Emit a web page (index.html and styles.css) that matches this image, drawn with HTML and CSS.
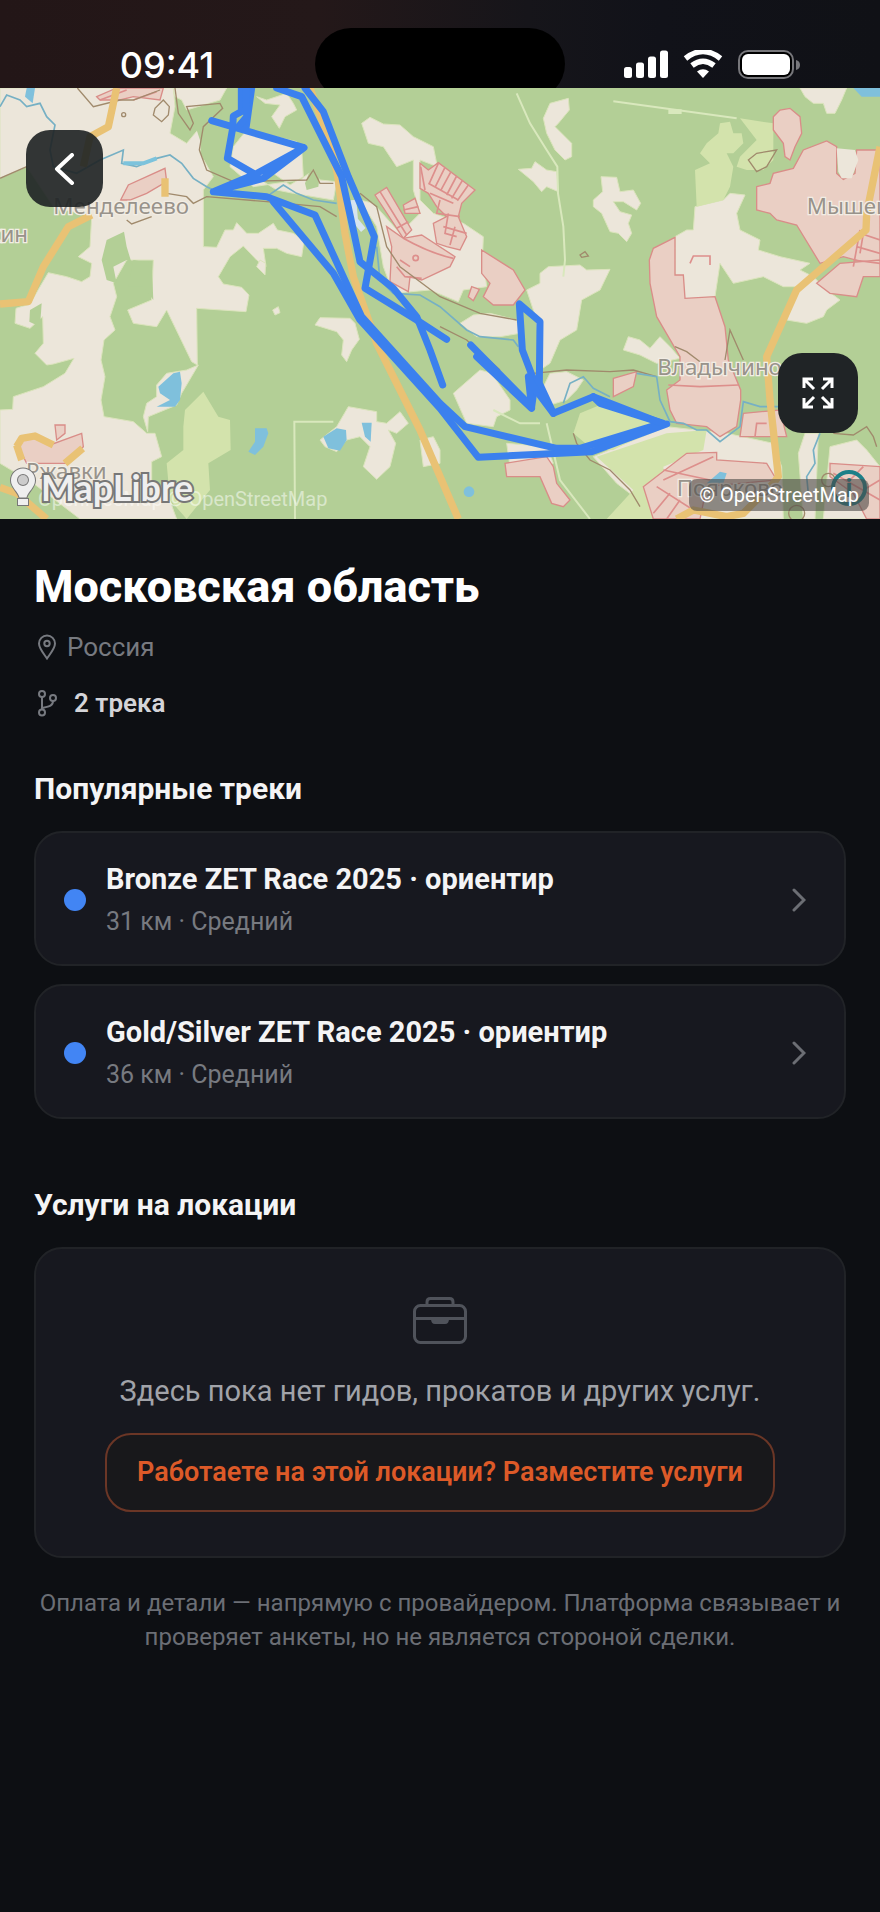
FILE: index.html
```html
<!DOCTYPE html>
<html lang="ru">
<head>
    <meta charset="utf-8">
    <meta name="viewport" content="width=device-width, initial-scale=1.0, viewport-fit=cover">
    <meta name="theme-color" content="#0d0f13">
    <title>Московская область</title>
    <link rel="stylesheet" href="styles.css">
</head>

<body>
    <header class="status">
        <span class="time">09:41</span>
        <div class="island"></div>
        <div class="status-icons">
            <svg width="44" height="28" viewBox="0 0 44 28" fill="#fff">
                <rect x="0" y="17" width="8" height="11" rx="2.5"/>
                <rect x="12" y="12.500" width="8" height="15.500" rx="2.500"/>
                <rect x="24" y="6.500" width="8" height="21.500" rx="2.500"/>
                <rect x="36" y="0.500" width="8" height="27.500" rx="2.500"/>
            </svg>
            <svg width="40" height="28" viewBox="0 0 40 28" fill="none" stroke="#fff">
                <path d="M2.500 8.500Q20-5.500 37.500 8.500" stroke-width="5.500"/>
                <path d="M9 15.500Q20 7 31 15.500" stroke-width="5.500"/>
                <path d="M14 21.500Q20 17 26 21.500L20 28z" fill="#fff" stroke="none"/>
            </svg>
            <svg width="62" height="29" viewBox="0 0 62 29">
                <rect x="1" y="1" width="54" height="27" rx="9" fill="#000" stroke="#77777b" stroke-width="2"/>
                <rect x="4" y="4" width="48" height="21" rx="6" fill="#fff"/>
                <path d="M58 10q4 1 4 5t-4 5z" fill="#77777b"/>
            </svg>
        </div>
    </header>

    <section class="map">
        <svg class="tiles" viewBox="0 264 2640 1293" preserveAspectRatio="xMidYMid slice">
            <rect y="264" width="2640" height="1293" fill="#b3cf96"/>

            <!-- fields -->
            <g fill="#ece6da" stroke="#dce4bd" stroke-width="3">
                <path d="M0 264H520L525 320 510 400 560 430 585 400 610 370 600 460 640 530 610 570V740L650 742 675 690 700 690 710 668 740 700 775 700 820 670 832 690 880 700 912 722 905 770 860 760 830 745 790 745 798 800 770 780 730 738 690 770 655 830 670 852 725 862 747 885 738 935 590 925 592 1095 575 1085 500 930 470 980 400 970 383 930 455 900 460 780 380 780 340 850 350 890 330 950 345 990 312 1020 303 1080 315 1130 303 1200 312 1250 400 1265 440 1300 465 1300 485 1370 455 1385 455 1440 500 1470 520 1530 530 1557H240L100 1450 0 1390V1230L38 1228 40 1190 130 1160 195 1120 222 1075 160 1092 140 1095 105 1060 130 1030 128 950 90 985 45 970 48 925 90 912 120 860 145 818 200 830 245 845 270 830 275 790 235 770 270 740 275 650 160 620 80 500 0 535Z"/>
                <path d="M520 264H680L660 300 560 330 545 300 525 290Z"/>
                <path d="M770 290L800 300 860 280 880 310 890 330 855 350 838 385 815 350 840 315 795 310Z"/>
                <path d="M1085 370L1110 352 1150 372 1200 375 1240 410 1300 440 1312 500 1260 480 1260 600 1300 640 1390 670 1450 710 1448 760 1460 860 1390 870 1375 905 1290 870 1180 880 1150 800 1130 680 1080 600 1120 610 1200 700 1260 640 1240 570 1240 480 1190 500 1150 440 1105 430Z"/>
                <path d="M740 390L890 425 905 445 910 530 870 555 820 520 790 545 830 570 880 580 1000 600 1010 545 960 540 940 510 900 540 760 560 690 500 700 440Z"/>
                <path d="M1630 355L1650 310 1705 295 1708 330 1675 370 1665 380 1715 430 1715 470 1695 480 1665 450 1640 400Z"/>
                <path d="M1555 508L1595 505 1605 485 1640 510 1670 515 1675 575 1640 560 1625 575 1600 545Z"/>
                <path d="M1803 530L1850 532 1860 575 1900 570 1922 610 1910 630 1870 605 1840 605 1860 635 1895 645 1885 670 1895 700 1880 725 1855 700 1830 695 1805 640 1780 620 1780 600 1808 575Z"/>
                <path d="M2085 620L2170 600 2190 580 2235 585 2210 640 2220 690 2280 720 2275 750 2340 770 2430 790 2400 810 2440 830 2480 870 2520 900 2480 930 2470 950 2420 970 2360 960 2400 860 2350 860 2290 830 2200 850 2160 790 2145 890 2050 900 2025 820 2025 710 2060 690 2080 690Z"/>
                <path d="M2400 264H2540L2525 300 2505 340 2480 340 2470 310 2440 310 2415 290Z"/>
                <path d="M945 975L960 953 1050 955 1065 970 1078 1018 1055 1050 1040 1085 1025 1065 1030 1020 1010 995Z"/>
                <path d="M960 1320L1010 1280 1045 1220 1130 1235 1130 1265 1160 1270 1200 1235 1225 1270 1190 1300 1165 1290 1187 1330 1170 1400 1130 1438 1090 1400 1110 1340 1080 1310 1040 1320 1010 1355 975 1340Z"/>
                <path d="M1380 970L1420 945 1470 940 1550 960 1560 1000 1500 1010 1430 1010Z"/>
                <path d="M1360 1180L1440 1110 1475 1120 1530 1200 1530 1230 1490 1250 1480 1280 1400 1270Z"/>
                <path d="M1620 820L1645 800 1740 795 1760 810 1830 808 1800 870 1745 900 1730 990 1680 1020 1650 1090 1620 1110 1610 960 1580 870 1620 850Z"/>
                <path d="M1870 1050L1885 1010 1920 1020 1950 1045 1980 1010 2010 1040 2040 1075 1970 1090 1920 1065Z"/>
                <path d="M1650 1120L1700 1115 1750 1140 1730 1170 1700 1200 1650 1215 1625 1170Z"/>
                <path d="M2000 1280L2180 1300 2320 1330 2345 1400 2350 1557H1990L1850 1450 1780 1370Z"/>
                <path d="M2415 1300L2455 1300 2445 1557H2410L2395 1360Z"/>
                <path d="M2490 1340L2570 1320 2600 1350 2640 1400V1557H2470Z"/>
                <path d="M780 780L770 800 795 825 797 790Z"/>
                <path d="M818 930L835 920 840 938 825 945Z"/>
                <path d="M1520 1330L1640 1340 1660 1390 1600 1410 1530 1400Z"/>
                <path d="M1260 1320L1300 1310 1320 1350V1390L1270 1400Z"/>
                <path d="M430 1250L440 1210 470 1190 470 1155 500 1120 560 1110 595 1095 545 1180 530 1215 445 1250 443 1295Z"/>
            </g>

            <!-- clearings -->
            <g fill="#d3e3ac">
                <path d="M2090 620L2085 510 2130 490 2100 460 2120 430 2155 400 2160 370 2190 365 2200 400 2225 400 2230 430 2200 460 2180 460 2200 500 2190 560 2170 600Z"/>
                <path d="M2220 355L2320 370 2320 480 2290 510 2240 510 2210 500 2220 470 2270 420Z"/>
                <path d="M555 1230L610 1175 655 1250 690 1260 692 1350 625 1390 630 1470 560 1557 510 1500 500 1390 550 1350 550 1280Z"/>
                <path d="M1740 1240L1800 1215 1920 1240 1990 1270 1840 1350 1780 1350 1720 1300Z"/>
                <path d="M1790 1370L2000 1300 2120 1290 2110 1350 1990 1400 2000 1557H1820L1900 1470Z"/>
            </g>

            <!-- groves inside the fields -->
            <g fill="#b3cf96">
                <path d="M320 720L372 695 380 740 395 790 380 780 340 800 350 850 320 840 305 780Z"/>
                <path d="M400 780L455 790 460 900 430 860 385 860Z"/>
                <path d="M90 930L125 910 120 980 88 965Z"/>
                <path d="M580 360L660 320 680 420 610 480 600 420Z"/>
                <path d="M915 550L930 510 960 520 955 560 920 570Z"/>
            </g>

            <!-- settlements -->
            <g fill="#eacfc4" stroke="#d98d88" stroke-width="4">
                <path d="M290 290L350 264H490L480 300 400 290 360 300 300 300Z"/>
                <path d="M362 600L385 555 495 505 500 545 440 580 390 600Z"/>
                <path d="M1125 585L1160 562 1235 690 1210 715Z"/>
                <path d="M1160 680L1210 715 1265 705 1365 770 1350 800 1265 840 1230 830 1225 875 1170 845 1175 740Z"/>
                <path d="M1260 490L1285 510 1315 488 1425 570 1385 610 1375 650 1400 710 1380 750 1340 740 1310 730 1300 670 1340 650 1310 620 1285 580 1260 565Z"/>
                <path d="M1210 615L1245 595 1260 640 1215 640Z"/>
                <path d="M1445 750L1540 810 1575 870 1540 915 1480 915 1450 890 1470 850 1445 820Z"/>
                <path d="M1415 860L1438 868 1420 902 1405 890Z"/>
                <path d="M1948 780L1960 745 2025 712V825L2050 825 2055 895 2145 890 2175 980 2185 1080 2222 1170 2222 1200 2210 1280 2160 1310 2120 1280 2030 1270 2010 1230 2000 1170 2040 1140V1070L1970 950 1950 850Z"/>
                <path d="M2320 350L2340 330 2370 325 2400 350 2405 400 2385 440 2370 480 2355 470 2350 430 2320 390Z"/>
                <path d="M2270 560L2310 550 2320 520 2380 505 2410 450 2480 423 2510 440V520L2530 538 2565 520 2570 450H2640V800L2530 770 2460 790 2390 675 2330 660 2310 640 2270 630Z"/>
                <path d="M2230 1240L2340 1230 2360 1310 2220 1310Z"/>
                <path d="M1515 1390L1640 1370 1660 1400 1670 1450 1710 1500 1690 1520 1655 1510 1620 1430 1520 1430Z"/>
                <path d="M1840 1135L1910 1115 1900 1160 1840 1190Z"/>
                <path d="M1930 1460L2060 1360 2150 1357 2150 1380 2300 1390 2330 1440 2220 1450 2120 1460 2100 1557H1960Z"/>
                <path d="M2490 1390L2640 1400V1557H2600L2560 1480 2490 1430Z"/>
                <path d="M2450 850L2520 790 2640 780V830L2590 830 2570 890 2490 880Z"/>
                <path d="M50 1330L90 1310 150 1335 245 1300 250 1340 200 1390 80 1390Z"/>
                <path d="M165 1275L195 1275 195 1300 170 1320Z"/>
            </g>
            <path d="M2510 445L2565 450 2575 480 2555 535 2525 535 2515 515Z" fill="#ece6da"/>
            <g fill="none" stroke="#dd8f8c" stroke-width="5">
                <path d="M1140 575L1220 705M1190 685L1225 665M1210 715Q1290 760 1360 775M1315 490L1288 550M1335 502L1305 562M1353 515L1322 572M1370 528L1340 585M1388 540L1355 595M1405 555L1372 602M1262 500L1275 570M1285 550L1375 600M1290 580L1360 610M1320 600L1310 640 1380 650M1345 640L1335 700 1370 710M1330 680L1400 700M1365 680L1350 735M1210 630L1255 620M1200 780L1230 800M1190 800L1215 830 1265 835"/>
                <circle cx="1247" cy="774" r="8"/>
                <path d="M1990 1440L2140 1370M1990 1410L2130 1440M1970 1460L2080 1530M2010 1480L1960 1540M2040 1500L2000 1557M2580 690L2560 800M2600 640L2580 760M2580 700L2640 720M2570 740L2640 760M2560 780L2640 790M2500 1420L2640 1500M2550 1440L2590 1400M2590 1470L2640 1440"/>
                <path d="M300 300L380 270M400 300L470 275M2265 1310L2270 1270 2300 1270M2070 790L2080 768H2130V795M2005 1155L2100 1160 2215 1155"/>
            </g>

            <!-- dirt roads and boundaries -->
            <g fill="none" stroke="#a08a6c" stroke-width="4">
                <path d="M232 264L280 320 360 300 400 300 480 270M525 264L535 340 570 390 580 370 560 320 660 310 668 325 610 380 598 450 620 510 700 545 920 540 940 510 960 550 1000 550M490 300L465 325 460 345 485 365 505 345 508 320ZM0 535L80 500M500 580L560 590 580 610 620 590 800 605 960 620 1010 650M380 660L395 672 455 650M1080 580L1130 620 1160 740 1200 800 1320 890 1440 940 1550 960M1320 980L1400 1020 1500 1110M1600 1120L1700 1110 1830 1115 1900 1110 1970 1130M2025 1040L2060 1055 2100 1085M2175 1080L2190 990 2230 1080M1720 1300L1730 1330 1770 1380 1830 1410 1890 1470 1920 1520M2245 480L2270 460 2330 450 2300 500 2270 515ZM1740 765L1755 755 1765 768 1745 772ZM2500 1300L2560 1305 2600 1280 2620 1310 2630 1340"/>
                <circle cx="371" cy="344" r="6"/>
                <circle cx="2485" cy="1440" r="20"/>
                <circle cx="2390" cy="1540" r="24"/>
            </g>
            <g fill="none" stroke="#d9e8bd" stroke-width="6">
                <path d="M1550 280L1590 370 1640 450 1672 500 1674 580 1690 680 1695 780 1690 830M1840 304L2210 355M885 1557L883 1265H1000M1640 1270L1680 1440 1770 1557M1480 1230L1560 1270 1620 1270"/>
                <path d="M2005 335h40" stroke-width="14"/>
            </g>

            <!-- rivers and ponds -->
            <g fill="none" stroke="#76b0c4" stroke-width="5">
                <path d="M0 320L20 285 60 300 80 320 120 310 140 350 165 375 150 450 160 500 230 520 300 480 370 450 365 490 410 500 470 475 510 465 545 490 580 535 620 560 640 570"/>
                <path d="M800 590L850 555 890 580 940 600 1010 610M1130 740L1140 840 1180 880 1260 885 1320 920 1400 990 1440 1010 1540 1020 1555 1040M1690 1210L1710 1150 1750 1130 1780 1165 1830 1190M1910 1120L1970 1130 1980 1200 2010 1265 2050 1270 2090 1290 2120 1290 2160 1325 2220 1280 2230 1205 2280 1220 2340 1220M2460 1300L2440 1350 2445 1390 2420 1430 2425 1480"/>
                <path d="M370 490L430 490 470 475" stroke="#7cc3dc" stroke-width="12"/>
                <path d="M1060 600L1065 660 1090 690" stroke="#d6e4ef" stroke-width="18"/>
            </g>
            <g fill="#7fc0dc">
                <path d="M80 264H105L98 310 75 290Z"/>
                <path d="M475 1160L520 1120 540 1115 545 1150 540 1200 525 1220 470 1220 510 1200 480 1180Z"/>
                <path d="M765 1285L800 1285 805 1300 790 1340 765 1365 745 1355 765 1325Z"/>
                <path d="M970 1310L1010 1285 1038 1290 1040 1320 1020 1352 985 1345Z"/>
                <path d="M1085 1268H1115L1112 1325 1095 1310Z"/>
                <path d="M2560 264H2640V290H2585Z"/>
                <path d="M2120 1450L2160 1415 2180 1420 2170 1450Z"/>
                <circle cx="1407" cy="1475" r="16"/>
            </g>

            <!-- highways -->
            <g class="road">
                <path d="M930 264L980 400 1012 520 1035 700 1060 830 1130 1030 1260 1290 1375 1557"/>
                <path d="M350 264L325 380 270 410 250 500"/>
                <path d="M275 645L205 680 130 800 85 905 0 912M0 1462L50 1480 140 1557"/>
                <path d="M2640 440L2600 640 2598 690 2390 870 2300 1070 2310 1200 2335 1430 2320 1450 2230 1540 2180 1550 2080 1530 2030 1557"/>
                <path d="M495 535V590M50 1340L65 1315 105 1308 160 1335"/>
                <path d="M248 1345L195 1390M50 1335L65 1380"/>
            </g>

            <!-- place names -->
            <g class="place">
                <text x="160" y="641">Менделеево</text>
                <text x="-70" y="725">ккин</text>
                <text x="2420" y="643">Мышецкое</text>
                <text x="1972" y="1126">Владычино</text>
                <text x="78" y="1438">Ржавки</text>
                <text x="2030" y="1488">Поярково</text>
            </g>

            <!-- tracks -->
            <g class="track">
                <path d="M755 264L738 385M724 264V335L700 348 698 385 682 475 765 523 912 443 635 362M912 443L790 535 640 575 765 523M640 575L800 590 945 645 1085 950 1320 1210 1395 1280 1670 1345 1740 1345 1985 1270 1780 1190 1660 1240 1618 1150 1620 965 1558 912 1567 1050 1605 1150 1595 1220 1412 1035"/>
                <path d="M738 264L740 350M740 350L715 380"/>
                <path d="M820 605L1000 820 1080 960 1320 1225 1435 1372 1775 1355 2000 1272"/>
                <path d="M830 264L905 290 1025 530 1060 690 1080 785 1180 865 1250 950 1290 1050 1328 1155"/>
                <path d="M915 264L970 335 1045 530 1123 710 1095 865 1250 960 1340 1018"/>
                <path d="M1430 1070L1595 1225 1585 1130 1600 1160 1660 1240M1780 1190L1800 1210 1990 1270"/>
            </g>
        </svg>

        <button class="map-btn back" type="button" aria-label="Назад">
            <svg width="32" height="32" viewBox="0 0 32 32"><path d="M23 2L8 16 23 30"/></svg>
        </button>
        <button class="map-btn expand" type="button" aria-label="Развернуть">
            <svg width="32" height="32" viewBox="0 0 32 32"><path d="M2 11V2H11M2 2L12 12M21 2H30V11M30 2L20 12M2 21V30H11M2 30L12 20M21 30H30V21M30 30L20 20"/></svg>
        </button>

        <div class="osm-faint">OpenFreeMap © OpenStreetMap</div>
        <a class="logo" href="#">
            <svg width="28" height="40" viewBox="0 0 28 40">
                <path d="M14 1.500a12 12 0 0 0-12 12c0 7 7 11 8.500 17h7C19 24.500 26 20.500 26 13.500a12 12 0 0 0-12-12zM9 32h10v6H9z" fill="#efefef" stroke="#777" stroke-width="2"/>
                <circle cx="14" cy="13" r="5" fill="#ccc" stroke="#777" stroke-width="2"/>
            </svg>
            MapLibre
        </a>
        <span class="info">i</span>
        <a class="attrib" href="#">© OpenStreetMap</a>
    </section>

    <main class="content">
        <h1>Московская область</h1>
        <p class="country">
            <svg width="24" height="26" viewBox="-2 0 24 26"><path d="M11 24.500C8 20 3 14.500 3 9.500a8 8 0 0 1 16 0c0 5-5 10.500-8 15z"/><circle cx="11" cy="9.500" r="2.700"/></svg>
            Россия
        </p>
        <p class="count">
            <svg width="24" height="28" viewBox="-2 0 24 28"><circle cx="6" cy="5" r="3"/><circle cx="17" cy="9" r="3"/><circle cx="6" cy="23.500" r="3"/><path d="M6 8v12.500M17 12c0 5-4 5.500-11 7"/></svg>
            2 трека
        </p>

        <h2>Популярные треки</h2>
        <div class="tracks">
            <a class="card" href="#">
                <span class="dot"></span>
                <span class="info-col">
                    <span class="name">Bronze ZET Race 2025 · ориентир</span>
                    <span class="meta">31 км · Средний</span>
                </span>
                <svg class="chevron" width="14" height="24" viewBox="0 0 14 24"><path d="M2 2L12 12 2 22"/></svg>
            </a>
            <a class="card" href="#">
                <span class="dot"></span>
                <span class="info-col">
                    <span class="name">Gold/Silver ZET Race 2025 · ориентир</span>
                    <span class="meta">36 км · Средний</span>
                </span>
                <svg class="chevron" width="14" height="24" viewBox="0 0 14 24"><path d="M2 2L12 12 2 22"/></svg>
            </a>
        </div>

        <h2>Услуги на локации</h2>
        <div class="empty">
            <svg width="54" height="48" viewBox="0 0 54 48"><rect x="1.500" y="8.500" width="51" height="37" rx="6"/><path d="M14 8V5q0-3.500 3.500-3.500h19Q40 1.500 40 5v3M1.500 21.500h51"/><path d="M18 22h18q0 5-4 5H22q-4 0-4-5z" class="solid"/></svg>
            <p>Здесь пока нет гидов, прокатов и других услуг.</p>
            <button class="cta" type="button">Работаете на этой локации? Разместите услуги</button>
        </div>

        <p class="note">Оплата и детали — напрямую с провайдером. Платформа связывает и проверяет анкеты, но не является стороной сделки.</p>
    </main>
</body>

</html>
```

FILE: styles.css
```css
* {
    box-sizing: border-box;
}
body {
    margin: 0;
    min-height: 100vh;
    background: #0d0f13;
    color: #f4f4f5;
    font-family: Roboto, "Noto Sans", sans-serif;
}

h1, h2, p {
    margin: 0;
}

a {
    color: inherit;
    text-decoration: none;
}

button {
    font-family: inherit;
    cursor: pointer;
}

svg {
    flex: none;
}

/* status bar */
.status {
    display: grid;
    grid-template-columns: 1fr 250px 1fr;
    height: 88px;
    padding-top: 28px;
    overflow: hidden;
    background: linear-gradient(90deg, #231617, #241819 36%, #16151a 60%, #111219 75%, #101116);
}

.time {
    padding: 16px 0 0 19px;
    text-align: center;
    color: #fff;
    font: 500 36px/42px Inter, sans-serif;
}

.island {
    height: 72px;
    border-radius: 36px;
    background: #000;
}

.status-icons {
    display: flex;
    align-items: flex-start;
    gap: 15px;
    padding: 22px 0 0 59px;
}

/* map */
.map {
    position: relative;
    height: 431px;
    overflow: hidden;
}

.tiles {
    display: block;
    width: 100%;
    height: 100%;
}

.road {
    fill: none;
    stroke: #e9c274;
    stroke-width: 22;
    stroke-linejoin: round;
}

.track {
    fill: none;
    stroke: #3b80ee;
    stroke-width: 21;
    stroke-linecap: round;
    stroke-linejoin: round;
}

.place {
    fill: #98938b;
    stroke: #f2ede4;
    stroke-width: 8;
    paint-order: stroke;
    font: 67px "Noto Sans", sans-serif;
}

.map-btn {
    position: absolute;
    display: flex;
    align-items: center;
    justify-content: center;
    padding: 0;
    border: none;
    border-radius: 24px;
    background: #202426;
}

.map-btn path {
    fill: none;
    stroke: #fff;
    stroke-width: 3;
}

.back {
    left: 26px;
    top: 42px;
    width: 77px;
    height: 77px;
    background: #1f2324e8;
}

.back path {
    stroke-width: 4;
    stroke-linecap: round;
    stroke-linejoin: round;
}

.expand {
    right: 22px;
    bottom: 86px;
    width: 80px;
    height: 80px;
}

.logo {
    position: absolute;
    left: 9px;
    bottom: 10px;
    display: flex;
    align-items: center;
    gap: 4px;
    color: #efefef;
    -webkit-text-stroke: 4px #777;
    paint-order: stroke fill;
    font: 700 36px/44px Lato, sans-serif;
}

.osm-faint {
    position: absolute;
    left: 38px;
    bottom: 8px;
    color: #ffffff80;
    font-size: 20px;
    line-height: 24px;
}

.attrib {
    position: absolute;
    right: 11px;
    bottom: 8px;
    padding: 0 10px;
    border-radius: 8px;
    background: #4d4a4799;
    color: #fff;
    font-size: 20px;
    line-height: 32px;
}

.info {
    position: absolute;
    right: 13px;
    bottom: 13px;
    width: 36px;
    height: 36px;
    border: 4px solid #1d7f88;
    border-radius: 50%;
    color: #1d7f88;
    text-align: center;
    font-size: 26px;
    font-weight: 700;
    line-height: 28px;
}

/* location */
.content {
    padding: 40px 34px;
}

h1 {
    font-size: 45px;
    font-weight: 800;
    line-height: 56px;
    color: #fff;
}

h2 {
    margin: 52px 0 24px;
    font-size: 30px;
    font-weight: 700;
    line-height: 36px;
}

.country, .count {
    display: flex;
    align-items: center;
    gap: 9px;
    font-size: 26px;
    line-height: 32px;
    color: #777a80;
}

.country {
    margin-top: 16px;
}

.count {
    gap: 16px;
    margin-top: 24px;
    color: #d4d4d8;
    font-weight: 600;
}

.country svg, .count svg {
    fill: none;
    stroke: #777a80;
    stroke-width: 2;
}

.tracks {
    display: flex;
    flex-direction: column;
    gap: 18px;
}

.card {
    display: flex;
    align-items: center;
    gap: 20px;
    padding: 29px 38px 26px 28px;
    border: 2px solid #212327;
    border-radius: 28px;
    background: #17181f;
}

.dot {
    width: 22px;
    height: 22px;
    border-radius: 50%;
    background: #4285f4;
}

.info-col {
    flex: 1;
    display: flex;
    flex-direction: column;
    gap: 10px;
}

.name {
    font-size: 29px;
    font-weight: 700;
    line-height: 34px;
}

.meta {
    font-size: 25px;
    line-height: 32px;
    color: #777a80;
}

.chevron {
    fill: none;
    stroke: #6c6e74;
    stroke-width: 3;
    stroke-linecap: round;
}

.tracks + h2 {
    margin-top: 68px;
}

.empty {
    display: flex;
    flex-direction: column;
    align-items: center;
    padding: 48px 32px 44px;
    border: 2px solid #212327;
    border-radius: 28px;
    background: #17181f;
}

.empty svg {
    fill: none;
    stroke: #50535b;
    stroke-width: 3;
}

.empty .solid {
    fill: #50535b;
    stroke: none;
}

.empty p {
    margin: 28px 0 24px;
    font-size: 29px;
    line-height: 36px;
    color: #a1a3a9;
}

.cta {
    padding: 20px 30px;
    border: 2px solid #6b3626;
    border-radius: 26px;
    background: #18181b;
    color: #dd5a28;
    font-size: 27px;
    font-weight: 600;
    line-height: 35px;
}

.note {
    margin-top: 28px;
    text-align: center;
    font-size: 24px;
    line-height: 34px;
    color: #6b6e75;
}
```
